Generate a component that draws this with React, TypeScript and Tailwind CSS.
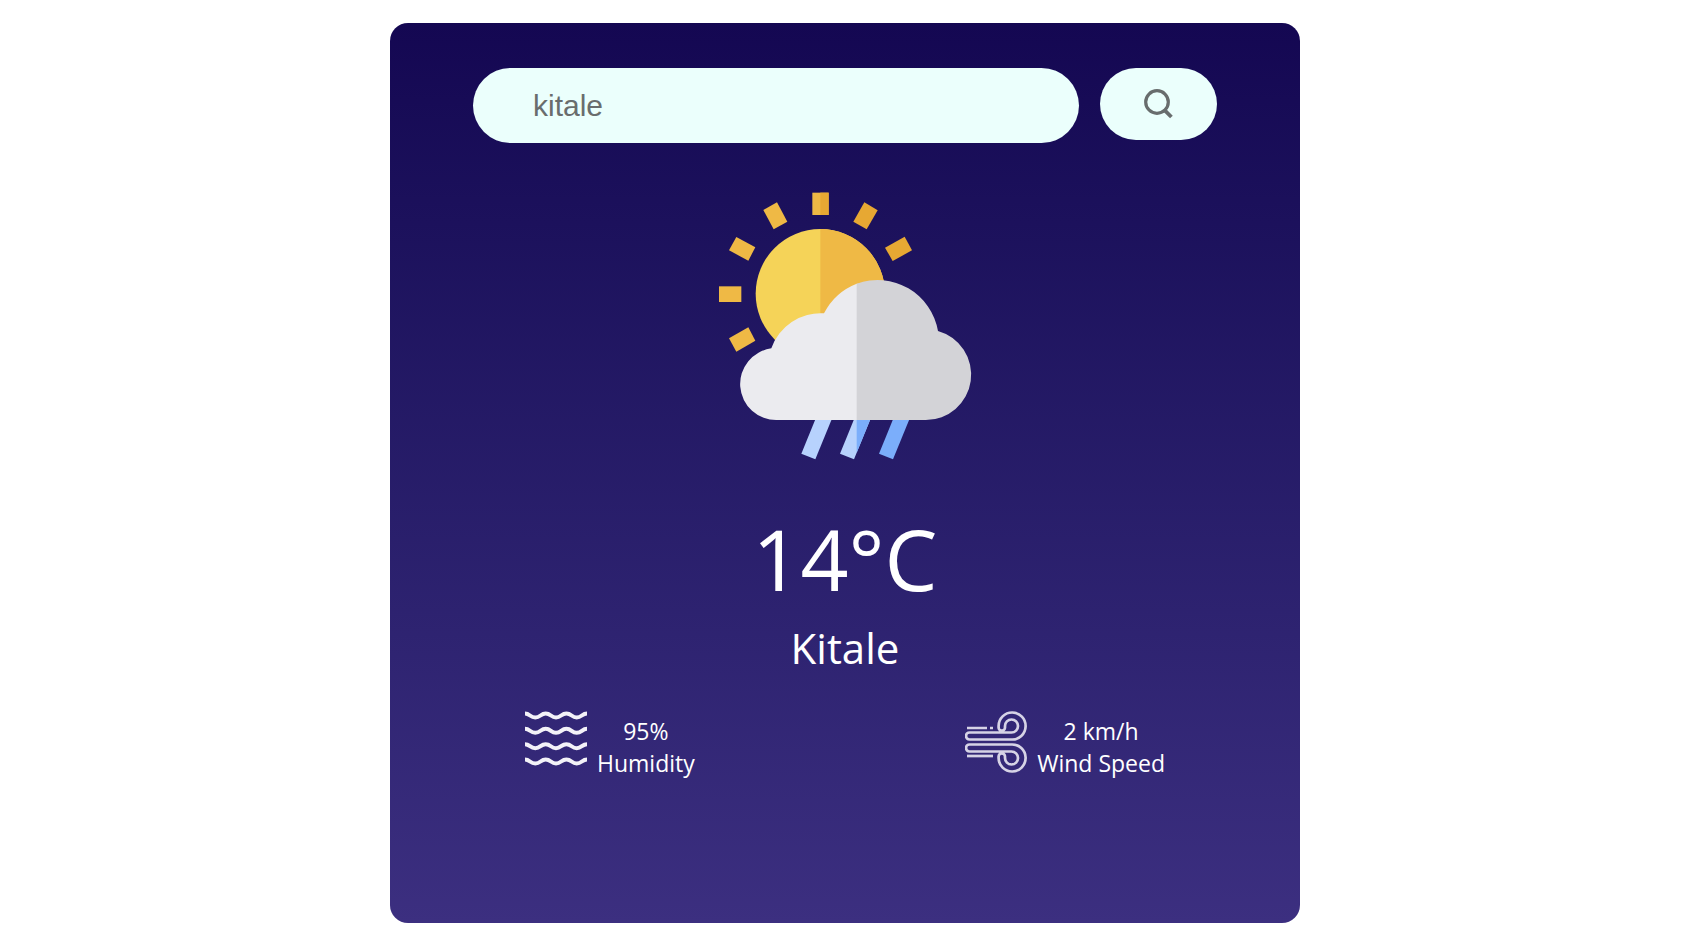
import React, { useState } from "react";

function SearchIcon() {
  return (
    <svg width="30" height="30" viewBox="0 0 30 30" fill="none" stroke="#686d6d" aria-hidden="true">
      <circle cx="13" cy="13" r="11.3" strokeWidth="3.2" />
      <path d="M20.3 20.8 27.4 28" strokeWidth="3.8" />
    </svg>
  );
}

function WeatherIcon() {
  return (
    <svg width="270" height="270" viewBox="0 0 810 810" role="img" aria-label="Sun, cloud and rain" className="block">
      <g fill="#efb945">
        <rect x="307" y="8" width="49" height="67" />
        <rect x="27" y="289" width="67" height="47" />
        <path d="M160 60 201 37 232 95 191 118z" />
        <path d="M57 181 79 141 136 172 115 212z" />
        <path d="M57 445 115 412 136 452 79 485z" />
      </g>
      <g fill="#e7a833">
        <rect x="331" y="8" width="25" height="67" />
        <path d="M463 37 503 61 470 118 430 95z" />
        <path d="M525 173 584 140 606 181 548 213z" />
      </g>
      <circle cx="331" cy="311" r="194" fill="#f5d358" />
      <path d="M331 117a194 194 0 0 1 0 388z" fill="#efb945" />
      <path d="M318 683H367L316 808 274 791z" fill="#b7d2fd" />
      <path d="M434 683H483L432 808 390 791z" fill="#b7d2fd" />
      <path d="M440 683H483L440 788z" fill="#7baefb" />
      <path d="M551 683H600L549 808 507 791z" fill="#7baefb" />
      <path d="M201 690A108 108 0 0 1 184 475A156 156 0 0 1 342 370A186 186 0 0 1 440 281H460V690z" fill="#ebebef" />
      <path d="M440 281A184 184 0 0 1 684 423A136 136 0 0 1 647 690H440z" fill="#d3d3d7" />
    </svg>
  );
}

const wave = "c5 0 5 4 10.300 4s5.200-4 10.400-4 5.200 4 10.300 4 5.200-4 10.400-4 5.200 4 10.300 4 5.200-4 10.300-4";

function HumidityIcon() {
  return (
    <svg width="62" height="62" viewBox="0 0 62 62" fill="none" stroke="#f3f2f8" strokeWidth="4" aria-hidden="true" className="block">
      {[2.5, 17.8, 33.2, 48.5].map((y) => (
        <path key={y} d={`M0 ${y}${wave}`} />
      ))}
    </svg>
  );
}

function WindIcon() {
  return (
    <svg width="62" height="62" viewBox="0 0 62 62" fill="none" stroke="#d6d3e6" strokeWidth="2.7" aria-hidden="true" className="block">
      <path d="M2 17H22M25 17H28" />
      <path d="M46.500 28.500H4.500A3.300 3.300 0 0 1 4.500 21.500H46.500A6.500 6.500 0 1 0 40 15V16.500A3.200 3.200 0 0 1 33.600 16.500V15A13.500 13.500 0 1 1 46.500 28.500z" />
      <path d="M46.500 33.500H4.500A3.300 3.300 0 0 0 4.500 40.500H46.500A6.500 6.500 0 1 1 40 47V45.500A3.200 3.200 0 0 0 33.600 45.500V47A13.500 13.500 0 1 0 46.500 33.500z" />
      <path d="M2 45H28" />
    </svg>
  );
}

function Detail({ icon, value, label }: { icon: React.ReactNode; value: string; label: string }) {
  return (
    <div className="flex items-start gap-2.5">
      {icon}
      <dl className="flex flex-col-reverse pt-1 text-center text-[23px] leading-8">
        <dt>{label}</dt>
        <dd>{value}</dd>
      </dl>
    </div>
  );
}

export default function App() {
  const [city, setCity] = useState("");
  return (
    <main className="pt-[23px] pr-[18px] pl-4 font-['Open_Sans','Noto_Sans',sans-serif] text-white">
      <section className="mx-auto flex min-h-[900px] max-w-[910px] flex-col items-center rounded-[18px] bg-linear-to-b from-[#140752] to-[#3c2f80] px-[83px] pt-[45px]">
        <form className="flex w-full items-start gap-[21px]" onSubmit={(e) => e.preventDefault()}>
          <input
            type="text"
            aria-label="City"
            placeholder="kitale"
            value={city}
            onChange={(e) => setCity(e.target.value)}
            className="h-[75px] min-w-0 flex-1 rounded-full bg-[#ebfffc] px-[60px] font-['Liberation_Sans',sans-serif] text-[30px] text-[#626262] outline-none placeholder:text-[#696d6d]"
          />
          <button type="submit" aria-label="Search" className="flex h-[72px] w-[117px] items-center justify-center rounded-full bg-[#ebfffc]">
            <SearchIcon />
          </button>
        </form>
        <div className="mt-[47px]">
          <WeatherIcon />
        </div>
        <h1 className="mt-[39px] text-[84px] leading-[120px]">14°C</h1>
        <h2 className="text-[42px] leading-[58px]">Kitale</h2>
        <div className="mt-[34px] flex w-full justify-between px-[52px]">
          <Detail icon={<HumidityIcon />} value="95%" label="Humidity" />
          <Detail icon={<WindIcon />} value="2 km/h" label="Wind Speed" />
        </div>
      </section>
    </main>
  );
}
